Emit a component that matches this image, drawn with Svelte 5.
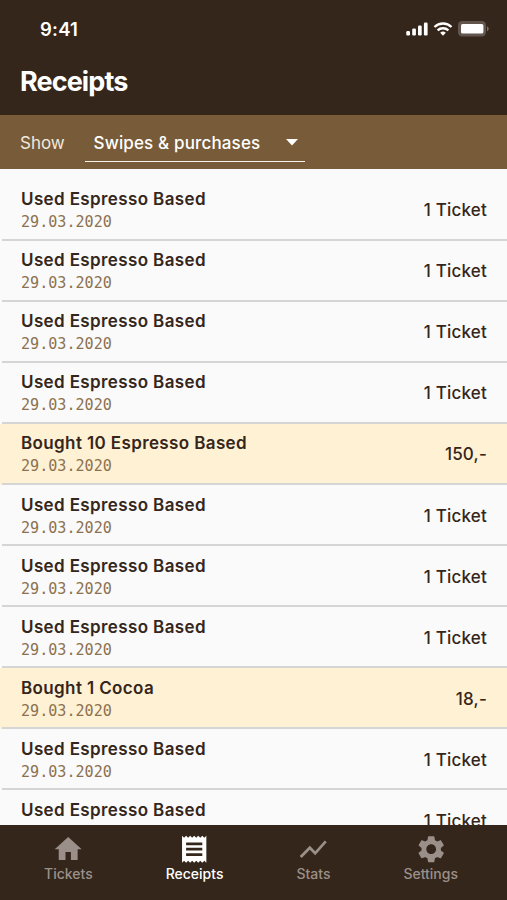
<script lang="ts">
	type Receipt = {
		title: string;
		date: string;
		amount: string;
		purchase?: boolean;
	};

	type Tab = {
		label: string;
		icon: string;
	};

	const used: Receipt = { title: "Used Espresso Based", date: "29.03.2020", amount: "1 Ticket" };

	const receipts: Receipt[] = [
		used,
		used,
		used,
		used,
		{ title: "Bought 10 Espresso Based", date: "29.03.2020", amount: "150,-", purchase: true },
		used,
		used,
		used,
		{ title: "Bought 1 Cocoa", date: "29.03.2020", amount: "18,-", purchase: true },
		used,
		used
	];

	const tabs: Tab[] = [
		{ label: "Tickets", icon: "M10 20v-6h4v6h5v-8h3L12 3 2 12h3v8z" },
		{
			label: "Receipts",
			icon: "M18 17H6v-2h12v2zm0-4H6v-2h12v2zm0-4H6V7h12v2zM3 22l1.5-1.5L6 22l1.5-1.5L9 22l1.5-1.5L12 22l1.5-1.5L15 22l1.5-1.5L18 22l1.5-1.5L21 22V2l-1.5 1.5L18 2l-1.5 1.5L15 2l-1.5 1.5L12 2l-1.5 1.5L9 2 7.5 3.5 6 2 4.5 3.5 3 2v20z"
		},
		{ label: "Stats", icon: "M3.5 18.49l6-6.01 4 4L22 6.92l-1.41-1.41-7.09 7.97-4-4L2 16.99z" },
		{
			label: "Settings",
			icon: "M19.14 12.94c.04-.3.06-.61.06-.94 0-.32-.02-.64-.07-.94l2.03-1.58c.18-.14.23-.41.12-.61l-1.92-3.32c-.12-.22-.37-.29-.59-.22l-2.39.96c-.5-.38-1.03-.7-1.62-.94L14.4 2.81c-.04-.24-.24-.41-.48-.41h-3.84c-.24 0-.43.17-.47.41l-.36 2.54c-.59.24-1.13.57-1.62.94l-2.39-.96c-.22-.08-.47 0-.59.22L2.74 8.87c-.12.21-.08.47.12.61l2.03 1.58c-.05.3-.09.63-.09.94s.02.64.07.94l-2.03 1.58c-.18.14-.23.41-.12.61l1.92 3.32c.12.22.37.29.59.22l2.39-.96c.5.38 1.03.7 1.62.94l.36 2.54c.05.24.24.41.48.41h3.84c.24 0 .44-.17.47-.41l.36-2.54c.59-.24 1.13-.56 1.62-.94l2.39.96c.22.08.47 0 .59-.22l1.92-3.32c.12-.22.07-.47-.12-.61l-2.01-1.58zM12 15.6c-1.98 0-3.6-1.62-3.6-3.6s1.62-3.6 3.6-3.6 3.6 1.62 3.6 3.6-1.62 3.6-3.6 3.6z"
		}
	];

	let active = $state("Receipts");
</script>

<div class="screen">
	<header>
		<div class="status">
			<span class="time">9:41</span>
			<div class="indicators">
				<svg width="22" height="14" viewBox="0 0 22 14" fill="#fff">
					<rect x="0.3" y="9" width="3.7" height="4.5" rx="1.2" />
					<rect x="6.2" y="6.5" width="3.7" height="7" rx="1.2" />
					<rect x="12" y="3.5" width="3.7" height="10" rx="1.2" />
					<rect x="17.9" y="0.5" width="3.7" height="13" rx="1.2" />
				</svg>
				<svg class="wifi" width="20" height="14" viewBox="0 0 20 14" fill="none" stroke="#fff">
					<path d="M1.5 5a12.2 12.2 0 0 1 17 0" stroke-width="2.4" />
					<path d="M4.6 8.4a7.8 7.8 0 0 1 10.8 0" stroke-width="2.3" />
					<path d="M10 13.7l-2.8-2.9a4 4 0 0 1 5.6 0z" fill="#fff" stroke="none" />
				</svg>
				<svg class="battery" width="31" height="16" viewBox="0 0 31 16">
					<rect width="28" height="15.4" rx="4.2" fill="#fff" fill-opacity="0.22" />
					<rect x="3" y="3" width="22.4" height="9.6" rx="1.6" fill="#fff" />
					<path
						d="M29 5.3v5c1-.4 1.7-1.4 1.7-2.5S30 5.7 29 5.3z"
						fill="#fff"
						fill-opacity="0.35"
					/>
				</svg>
			</div>
		</div>
		<h1>Receipts</h1>
	</header>

	<div class="filter">
		<span class="filter-label">Show</span>
		<button class="select" type="button">
			<span>Swipes &amp; purchases</span>
			<svg width="12" height="7" viewBox="0 0 12 7"><path d="M0 0h12L6 6.5z" fill="#fff" /></svg>
		</button>
	</div>

	<ul class="receipts">
		{#each receipts as receipt}
			<li class:purchase={receipt.purchase}>
				<div>
					<div class="title">{receipt.title}</div>
					<div class="date">{receipt.date}</div>
				</div>
				<span class="amount">{receipt.amount}</span>
			</li>
		{/each}
	</ul>

	<nav>
		{#each tabs as tab (tab.label)}
			<button
				class="tab"
				class:active={tab.label === active}
				type="button"
				onclick={() => (active = tab.label)}
			>
				<svg width="32.4" height="32.4" viewBox="0 0 24 24">
					<path d={tab.icon} fill="currentColor" />
				</svg>
				<span>{tab.label}</span>
			</button>
		{/each}
	</nav>
</div>

<style>
	:global(body) {
		margin: 0;
	}

	.screen {
		display: flex;
		flex-direction: column;
		height: 900px;
		overflow: hidden;
		font-family: Inter, "Liberation Sans", sans-serif;
		color: #35261b;
		background: #fafafa;
	}

	header {
		flex: none;
		box-sizing: border-box;
		height: 115px;
		padding: 18px 18px 0 40px;
		color: #fff;
		background: #35261b;
	}

	.status {
		display: flex;
		align-items: center;
		justify-content: space-between;
		height: 22px;
	}

	.time {
		font-size: 18.5px;
		font-weight: 600;
		letter-spacing: 0.2px;
	}

	.indicators {
		display: flex;
		align-items: center;
	}

	.wifi {
		margin-left: 5px;
	}

	.battery {
		margin-left: 5px;
	}

	h1 {
		margin: 24px 0 0 -20px;
		font-size: 27px;
		line-height: 35px;
		font-weight: 700;
		letter-spacing: -0.9px;
	}

	.filter {
		flex: none;
		display: flex;
		align-items: flex-start;
		box-sizing: border-box;
		height: 54px;
		padding: 11px 20px 0;
		color: #fff;
		background: #785b38;
	}

	.filter-label {
		width: 64.5px;
		font-size: 17px;
		line-height: 34px;
		color: #f1e9df;
	}

	button {
		padding: 0;
		font: inherit;
		color: inherit;
		background: none;
		border: none;
		cursor: pointer;
	}

	.select {
		display: flex;
		align-items: center;
		justify-content: space-between;
		box-sizing: border-box;
		width: 220px;
		height: 36px;
		padding: 0 7px 2px 9px;
		font-size: 17px;
		font-weight: 500;
		letter-spacing: 0.15px;
		border-bottom: 1.5px solid #f5f0e8;
	}

	.receipts {
		flex: 1;
		min-height: 0;
		margin: 0;
		padding: 10.5px 0 0;
		overflow: hidden;
		list-style: none;
	}

	li {
		display: flex;
		align-items: center;
		justify-content: space-between;
		box-sizing: border-box;
		height: 61.1px;
		padding: 1px 20px 0 21px;
		background: linear-gradient(#d5d5d5, #d5d5d5) 2px 100% / 100% 2px no-repeat;
	}

	li.purchase {
		background-color: #fff1d4;
	}

	.title {
		font-size: 17px;
		line-height: 23px;
		font-weight: 600;
		letter-spacing: 0.38px;
	}

	.date {
		font-family: "DejaVu Sans Mono", "Liberation Mono", monospace;
		font-size: 15.1px;
		line-height: 22px;
		color: #8b7151;
	}

	.amount {
		margin-bottom: 1px;
		font-size: 17px;
		font-weight: 500;
		letter-spacing: 0.2px;
	}

	nav {
		flex: none;
		display: flex;
		align-items: flex-start;
		justify-content: space-between;
		box-sizing: border-box;
		height: 75.5px;
		padding: 8px 49px 0 44px;
		background: #35261b;
	}

	.tab {
		display: flex;
		flex-direction: column;
		align-items: center;
		font-size: 14px;
		line-height: 18px;
		font-weight: 500;
		color: #9a9089;
	}

	.tab.active {
		color: #fff;
	}
</style>
